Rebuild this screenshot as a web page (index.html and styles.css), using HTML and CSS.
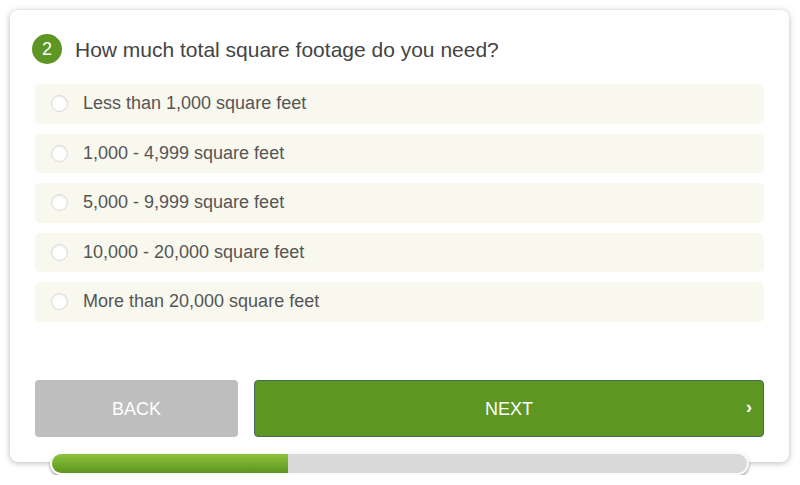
FILE: index.html
```html
<!DOCTYPE html>
<html>
<head>
<meta charset="utf-8">
<link rel="stylesheet" href="styles.css">
</head>
<body>
<div class="wrap">
  <div class="card">
    <div class="question">
      <span class="badge">2</span>
      <span class="qtext">How much total square footage do you need?</span>
    </div>
    <div class="options">
      <label class="option"><span class="radio"></span>Less than 1,000 square feet</label>
      <label class="option"><span class="radio"></span>1,000 - 4,999 square feet</label>
      <label class="option"><span class="radio"></span>5,000 - 9,999 square feet</label>
      <label class="option"><span class="radio"></span>10,000 - 20,000 square feet</label>
      <label class="option"><span class="radio"></span>More than 20,000 square feet</label>
    </div>
    <div class="buttons">
      <button class="btn back">BACK</button>
      <button class="btn next">NEXT<span class="chev">›</span></button>
    </div>
  </div>
  <div class="progress"><div class="fill" style="width:34%"></div></div>
</div>
</body>
</html>
```
FILE: styles.css
```css
html, body { margin: 0; padding: 0; background: #fff; }
body { font-family: "Liberation Sans", Arial, sans-serif; }
.wrap { padding: 10px 11px 0 10px; }
.card {
  box-sizing: border-box;
  height: 452px;
  background: #fff;
  border-radius: 8px;
  box-shadow: 0 1px 6px rgba(0,0,0,0.28);
  padding: 24px 25px 25px 25px;
  display: flex;
  flex-direction: column;
}
.question { display: flex; align-items: center; gap: 13px; height: 30px; margin-left: -3px; }
.badge {
  width: 30px; height: 30px; border-radius: 50%;
  background: #5e9624; color: #fff;
  display: flex; align-items: center; justify-content: center;
  font-size: 18px;
}
.qtext { font-size: 21px; color: #444; padding-top: 1px; }
.options { display: flex; flex-direction: column; gap: 10px; margin-top: 20px; }
.option {
  box-sizing: border-box;
  height: 39.5px;
  background: #f9f8ee;
  border-radius: 5px;
  display: flex; align-items: center;
  padding-left: 16px;
  font-size: 18px; color: #555;
}
.radio {
  box-sizing: border-box;
  width: 17px; height: 17px; border-radius: 50%;
  background: #fff; border: 1px solid #d8d8d8;
  box-shadow: inset 0 1px 2px rgba(0,0,0,0.08);
  margin-right: 15px;
}
.buttons { display: flex; gap: 16px; margin-top: auto; height: 57px; }
.btn {
  border-radius: 4px;
  font-family: "Liberation Sans", Arial, sans-serif;
  font-size: 18px; color: #fff;
  padding-top: 3px;
  cursor: pointer;
}
.back { width: 203px; background: #bebebe; border: none; }
.next {
  flex: 1; background: #5e9624; border: 1px solid #456b5c;
  position: relative;
}
.chev { position: absolute; right: 11px; top: 50%; transform: translateY(-58%); font-size: 18px; font-weight: bold; }
.progress {
  position: relative;
  box-sizing: border-box;
  width: 699px; height: 23px;
  margin: -10px 0 0 40px;
  background: #d9d9d9;
  border: 2px solid #fbfbf5;
  border-radius: 12px;
  box-shadow: 0 2px 3px rgba(0,0,0,0.35);
  overflow: hidden;
}
.fill {
  height: 100%;
  background: linear-gradient(#8fc33d, #5c941f);
}
```
